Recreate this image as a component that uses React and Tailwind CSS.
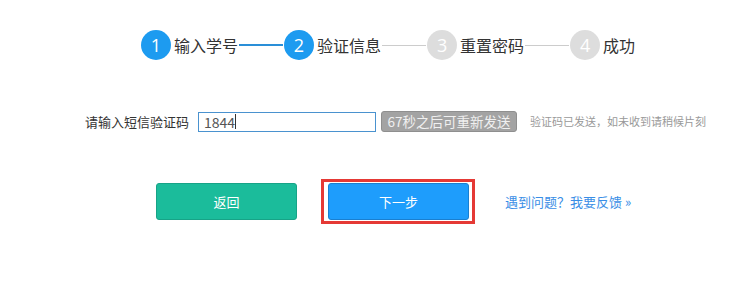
import React from 'react';

const font = { fontFamily: '"Microsoft YaHei", "Noto Sans CJK SC", "Noto Sans", sans-serif' };

const steps = [
  { n: 1, label: '输入学号', active: true },
  { n: 2, label: '验证信息', active: true },
  { n: 3, label: '重置密码', active: false },
  { n: 4, label: '成功', active: false },
];

const Step = ({ n, label, active, last, nextActive }) => (
  <div className="flex items-center">
    <div
      className={
        'w-[30px] h-[30px] rounded-full flex items-center justify-center text-white text-[18px] ' +
        (active ? 'bg-[#1d9bf0]' : 'bg-[#dddddd]')
      }
      style={{ fontFamily: '"Open Sans", "Noto Sans", sans-serif' }}
    >
      {n}
    </div>
    <span className="ml-[3px] text-[16px] text-[#333333] leading-none">{label}</span>
    {!last && (
      <div
        className={
          'w-[44px] mx-[1px] ' + (nextActive ? 'h-[2px] bg-[#2a8fd8]' : 'h-[1px] bg-[#cccccc]')
        }
      />
    )}
  </div>
);

export default function App() {
  return (
    <div className="w-[742px] h-[291px] bg-white overflow-hidden" style={font}>
      <div className="flex items-center pl-[141px] pt-[30px]">
        {steps.map((s, i) => (
          <Step
            key={s.n}
            {...s}
            last={i === steps.length - 1}
            nextActive={steps[i + 1] && steps[i + 1].active}
          />
        ))}
      </div>

      <div className="flex items-center pl-[85px] mt-[51px]">
        <span className="text-[13px] text-[#333333] w-[105px]">请输入短信验证码</span>
        <div className="ml-[8px] w-[178px] h-[20px] border border-[#4a92cf] flex items-center pl-[5px]">
          <span className="text-[14px] text-[#555555] leading-none">1844</span>
          <span className="w-[1px] h-[15px] bg-[#333333]" />
        </div>
        <div className="ml-[5px] w-[136px] h-[21px] rounded-[3px] bg-[#a3a3a3] border border-[#8f8f8f] flex items-center justify-center text-[13.5px] text-[#f0f0f0]">
          67秒之后可重新发送
        </div>
        <span className="ml-[13px] text-[11px] text-[#999999]">验证码已发送，如未收到请稍候片刻</span>
      </div>

      <div className="flex items-center pl-[156px] mt-[47px]">
        <button className="w-[141px] h-[37px] rounded-[3px] bg-[#1bbc9b] border border-[#17a387] text-white text-[13px]">
          返回
        </button>
        <div className="ml-[24px] border-[3px] border-[#e53935] pl-[4px] pr-[3px] py-[1px]">
          <button className="w-[141px] h-[37px] rounded-[3px] bg-[#1e9dfc] border border-[#1a7fd0] text-white text-[13px] block">
            下一步
          </button>
        </div>
        <a className="ml-[30px] text-[13px] text-[#3a8ee6]">遇到问题？我要反馈 »</a>
      </div>
    </div>
  );
}
